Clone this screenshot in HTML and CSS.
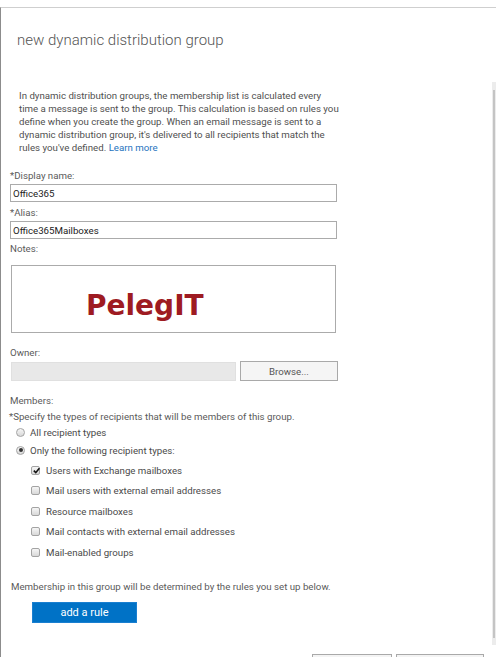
FILE: index.html
```html
<!DOCTYPE html>
<html lang="en">
  <head>
    <meta charset="UTF-8" />
    <meta name="viewport" content="width=device-width, initial-scale=1.0" />
    <title>new dynamic distribution group</title>
    <link rel="stylesheet" href="styles.css">
  </head>
  <body>
    <div class="dialog">
      <div class="header">
        <h1>new dynamic distribution group</h1>
      </div>

      <div class="body">
        <div class="form">
          <p class="intro">
            In dynamic distribution groups, the membership list is calculated every<br>
            time a message is sent to the group. This calculation is based on rules you<br>
            define when you create the group. When an email message is sent to a<br>
            dynamic distribution group, it's delivered to all recipients that match the<br>
            rules you've defined. <a href="#">Learn more</a>
          </p>

          <label class="label first">*Display name:</label>
          <input class="field" type="text" value="Office365" />

          <label class="label">*Alias:</label>
          <input class="field" type="text" value="Office365Mailboxes" />

          <label class="label notes-label">Notes:</label>
          <div class="notes">
            <span class="watermark">PelegIT</span>
          </div>

          <label class="label owner-label">Owner:</label>
          <div class="owner-row">
            <div class="owner-field"></div>
            <button class="browse">Browse...</button>
          </div>

          <div class="label members-label">Members:</div>
          <div class="label specify">*Specify the types of recipients that will be members of this group.</div>

          <div class="radio-row">
            <span class="radio"></span>
            <span>All recipient types</span>
          </div>
          <div class="radio-row">
            <span class="radio checked"></span>
            <span>Only the following recipient types:</span>
          </div>

          <div class="check-list">
            <div class="check-row">
              <span class="check checked">
                <svg viewBox="0 0 10 10" width="9" height="9"><path d="M2 5.2 L4.2 7.4 L8.2 2.4" fill="none" stroke="#111" stroke-width="1.8"/></svg>
              </span>
              <span>Users with Exchange mailboxes</span>
            </div>
            <div class="check-row">
              <span class="check"></span>
              <span>Mail users with external email addresses</span>
            </div>
            <div class="check-row">
              <span class="check"></span>
              <span>Resource mailboxes</span>
            </div>
            <div class="check-row">
              <span class="check"></span>
              <span>Mail contacts with external email addresses</span>
            </div>
            <div class="check-row">
              <span class="check"></span>
              <span>Mail-enabled groups</span>
            </div>
          </div>

          <div class="label membership">Membership in this group will be determined by the rules you set up below.</div>
          <button class="add-rule">add a rule</button>
        </div>

        <div class="scrollbar">
          <div class="thumb"></div>
        </div>
      </div>

      <div class="footer">
        <button class="footer-btn save"></button>
        <button class="footer-btn cancel"></button>
      </div>
    </div>
  </body>
</html>
```

FILE: styles.css
```css
html,
body {
  margin: 0;
  height: 100%;
  overflow: hidden;
  background: white;
}
body {
  font-family: Roboto, "Liberation Sans", sans-serif;
  font-size: 9.7px;
  color: #444;
}
.dialog {
  margin-top: 7px;
  border-top: 1px solid #cfcfcf;
  border-left: 1px solid #8c8c8c;
  height: 100%;
}
.header {
  height: 74px;
  box-sizing: border-box;
  padding: 22px 0 0 16px;
}
.header h1 {
  margin: 0;
  font-weight: 300;
  font-size: 15px;
  line-height: 20px;
  color: #555;
}
.body {
  display: flex;
  height: 563px;
}
.form {
  flex: 1;
  padding-left: 9px;
}
.intro {
  margin: 7px 0 0 9px;
  white-space: nowrap;
  line-height: 13px;
  color: #505050;
}
.intro a {
  color: #1e73be;
  text-decoration: none;
}
.label {
  display: block;
  line-height: 14px;
  color: #5a5a5a;
  margin-top: 4px;
}
.label.first {
  margin-top: 15px;
}
.field {
  display: block;
  box-sizing: border-box;
  width: 327px;
  height: 18px;
  margin: 1px 0 0;
  padding: 0 2px;
  border: 1px solid #ababab;
  font-family: inherit;
  font-size: 9.7px;
  color: #222;
  outline: none;
}
.notes-label {
  margin-top: 3px;
}
.notes {
  box-sizing: border-box;
  width: 325px;
  height: 68px;
  margin: 9px 0 0 1px;
  border: 1px solid #ababab;
  padding: 25px 0 0 74px;
}
.watermark {
  font-family: "DejaVu Sans", Verdana, sans-serif;
  font-weight: bold;
  font-size: 28px;
  line-height: 30px;
  color: #9e1b22;
}
.owner-label {
  margin-top: 13px;
}
.owner-row {
  display: flex;
  gap: 4px;
  margin: 1px 0 0 1px;
}
.owner-field {
  width: 225px;
  height: 19px;
  background: #e8e8e8;
  border: 1px solid #e0e0e0;
  box-sizing: border-box;
  margin-top: 1px;
}
.browse {
  width: 98px;
  height: 20px;
  background: #f5f5f5;
  border: 1px solid #a9a9a9;
  font-family: inherit;
  font-size: 9.7px;
  color: #555;
  padding: 0;
}
.members-label {
  margin-top: 13px;
}
.specify {
  margin: 2px 0 0 -1px;
}
.radio-row,
.check-row {
  display: flex;
  align-items: center;
  gap: 5px;
  color: #4a4a4a;
}
.radio-row {
  height: 18px;
  margin: 0 0 0 6px;
}
.specify + .radio-row {
  margin-top: -1px;
}
.radio {
  width: 9px;
  height: 9px;
  box-sizing: border-box;
  border: 1px solid #a3a3a3;
  border-radius: 50%;
  background: linear-gradient(#f6f6f6, #d8d8d8);
  display: flex;
  align-items: center;
  justify-content: center;
}
.radio.checked::after {
  content: "";
  width: 4px;
  height: 4px;
  border-radius: 50%;
  background: #333;
}
.check-list {
  margin: 1px 0 0 21px;
}
.check-row {
  height: 20.5px;
  gap: 6px;
}
.check {
  width: 9px;
  height: 9px;
  box-sizing: border-box;
  border: 1px solid #a3a3a3;
  border-radius: 2px;
  background: linear-gradient(#f6f6f6, #d8d8d8);
  position: relative;
}
.check svg {
  position: absolute;
  left: 0;
  top: -1px;
}
.membership {
  margin-top: 17px;
  margin-left: 1px;
}
.add-rule {
  display: block;
  margin: 8px 0 0 22px;
  width: 105px;
  height: 21px;
  background: #0072c6;
  border: 1px solid #1a7fd0;
  color: white;
  font-family: inherit;
  font-size: 11px;
  padding: 0;
}
.scrollbar {
  width: 4px;
  background: #ececec;
  padding-top: 8px;
  box-sizing: border-box;
}
.thumb {
  width: 2px;
  height: 548px;
  background: #c4c4c4;
  margin-left: 1px;
}
.footer {
  display: flex;
  gap: 4px;
  margin: 9px 0 0 311px;
}
.footer-btn {
  width: 80px;
  height: 24px;
  background: #f4f4f4;
  border: 1px solid #a9a9a9;
  padding: 0;
}
.footer-btn.cancel {
  width: 88px;
}
```
